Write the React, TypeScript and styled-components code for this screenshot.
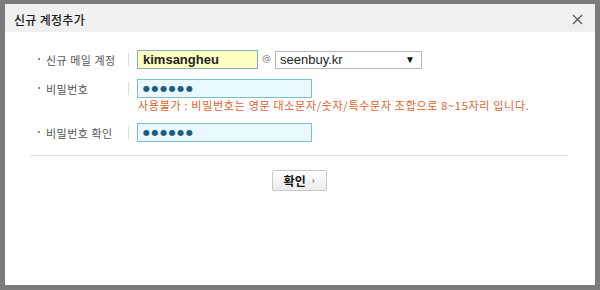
import styled, { createGlobalStyle } from "styled-components"

const GlobalStyle = createGlobalStyle`
  html, body {
    margin: 0;
    padding: 0;
    background: #fff;
  }
  body {
    font-family: "Noto Sans CJK KR", "DejaVu Sans", sans-serif;
  }
`

const Window = styled.div`
  box-sizing: border-box;
  width: 600px;
  height: 290px;
  border: 5px solid #7b7b7b;
  border-top-width: 4px;
  background: #fff;
  display: flex;
  flex-direction: column;
`

const TitleBar = styled.div`
  height: 28px;
  background: #f0f0f0;
  display: flex;
  align-items: center;
  justify-content: space-between;
  padding: 2px 12px 0 9px;
  box-sizing: border-box;
`

const Title = styled.h1`
  margin: 0;
  font-size: 12px;
  font-weight: 500;
  color: #1a1a1a;
  letter-spacing: 0.3px;
`

const CloseButton = styled.button`
  border: 0;
  background: none;
  padding: 0;
  width: 12px;
  height: 12px;
  display: flex;
  align-items: center;
  justify-content: center;
  cursor: pointer;
`

const Body = styled.div`
  padding: 18px 27px 0 25px;
`

const Form = styled.div`
  display: flex;
  flex-direction: column;
  gap: 10px;
  padding-left: 8px;
  padding-bottom: 13px;
  border-bottom: 1px solid #e2e2e2;
`

const Row = styled.div`
  display: flex;
  align-items: flex-start;
`

const Label = styled.div`
  width: 90px;
  height: 19px;
  display: flex;
  align-items: center;
  font-size: 11px;
  color: #555;
  letter-spacing: 0.5px;
  white-space: nowrap;

  &::before {
    content: "";
    width: 2px;
    height: 2px;
    background: #888;
    margin: 0 6px 2px 0;
  }
`

const Sep = styled.div`
  width: 1px;
  height: 13px;
  margin: 3px 8px 0 0;
  background: #dcdcdc;
`

const Field = styled.div`
  display: flex;
  flex-direction: column;
`

const Inline = styled.div`
  display: flex;
  align-items: center;
`

const TextInput = styled.input<{ $w: number; $tone: "yellow" | "blue" }>`
  box-sizing: border-box;
  width: ${(p) => p.$w}px;
  height: 19px;
  margin: 0;
  padding: 0 0 0 5px;
  border: 1px solid ${(p) => (p.$tone === "yellow" ? "#7fb3b8" : "#7cc0cc")};
  background: ${(p) => (p.$tone === "yellow" ? "#ffffc2" : "#e8f8fd")};
  font-family: "Liberation Sans", Arial, sans-serif;
  font-size: 13px;
  font-weight: bold;
  color: #222;
  outline: none;
`

const Dots = styled(TextInput)`
  color: #1d5d82;
  font-family: "DejaVu Sans", sans-serif;
  font-size: 8px;
  letter-spacing: 1.6px;
  padding-left: 5px;
`

const At = styled.span`
  font-family: "DejaVu Sans", sans-serif;
  font-size: 9px;
  color: #777;
  margin: 0 4px 3px 4px;
`

const Select = styled.div`
  box-sizing: border-box;
  width: 147px;
  height: 18px;
  border: 1px solid #b5b5b5;
  background: #fff;
  display: flex;
  align-items: center;
  justify-content: space-between;
  padding: 0 6px 0 4px;
  font-family: "Liberation Sans", Arial, sans-serif;
  font-size: 13px;
  color: #222;
`

const Caret = styled.span`
  font-size: 10px;
  color: #111;
`

const ErrorText = styled.div`
  font-size: 11px;
  line-height: 15px;
  color: #e2612a;
  letter-spacing: 0.7px;
  white-space: nowrap;
  padding-left: 1px;
`

const Actions = styled.div`
  display: flex;
  justify-content: center;
  padding-top: 14px;
`

const ConfirmButton = styled.button`
  box-sizing: border-box;
  width: 55px;
  height: 21px;
  border: 1px solid #c8c8c8;
  border-radius: 2px;
  background: linear-gradient(#ffffff, #ececec);
  font-family: "Noto Sans CJK KR", sans-serif;
  font-size: 12px;
  font-weight: bold;
  color: #111;
  display: flex;
  align-items: center;
  justify-content: center;
  gap: 6px;
  padding: 0 0 1px 0;
  cursor: pointer;
`

const Chevron = styled.span`
  font-size: 9px;
  font-weight: normal;
  color: #333;
`

export default function App() {
  return (
    <>
      <GlobalStyle />
      <Window>
        <TitleBar>
          <Title>신규 계정추가</Title>
          <CloseButton aria-label="닫기">
            <svg width="11" height="11" viewBox="0 0 11 11">
              <path d="M1 1L10 10M10 1L1 10" stroke="#555" strokeWidth="1.2" fill="none" />
            </svg>
          </CloseButton>
        </TitleBar>
        <Body>
          <Form>
            <Row>
              <Label>신규 메일 계정</Label>
              <Sep />
              <Inline>
                <TextInput $w={121} $tone="yellow" defaultValue="kimsangheu" />
                <At>@</At>
                <Select>
                  <span>seenbuy.kr</span>
                  <Caret>▼</Caret>
                </Select>
              </Inline>
            </Row>
            <Row>
              <Label>비밀번호</Label>
              <Sep />
              <Field>
                <Dots $w={175} $tone="blue" defaultValue="●●●●●●" readOnly />
                <ErrorText>사용불가 : 비밀번호는 영문 대소문자/숫자/특수문자 조합으로 8~15자리 입니다.</ErrorText>
              </Field>
            </Row>
            <Row>
              <Label>비밀번호 확인</Label>
              <Sep />
              <Dots $w={175} $tone="blue" defaultValue="●●●●●●" readOnly />
            </Row>
          </Form>
          <Actions>
            <ConfirmButton>
              확인 <Chevron>›</Chevron>
            </ConfirmButton>
          </Actions>
        </Body>
      </Window>
    </>
  )
}
